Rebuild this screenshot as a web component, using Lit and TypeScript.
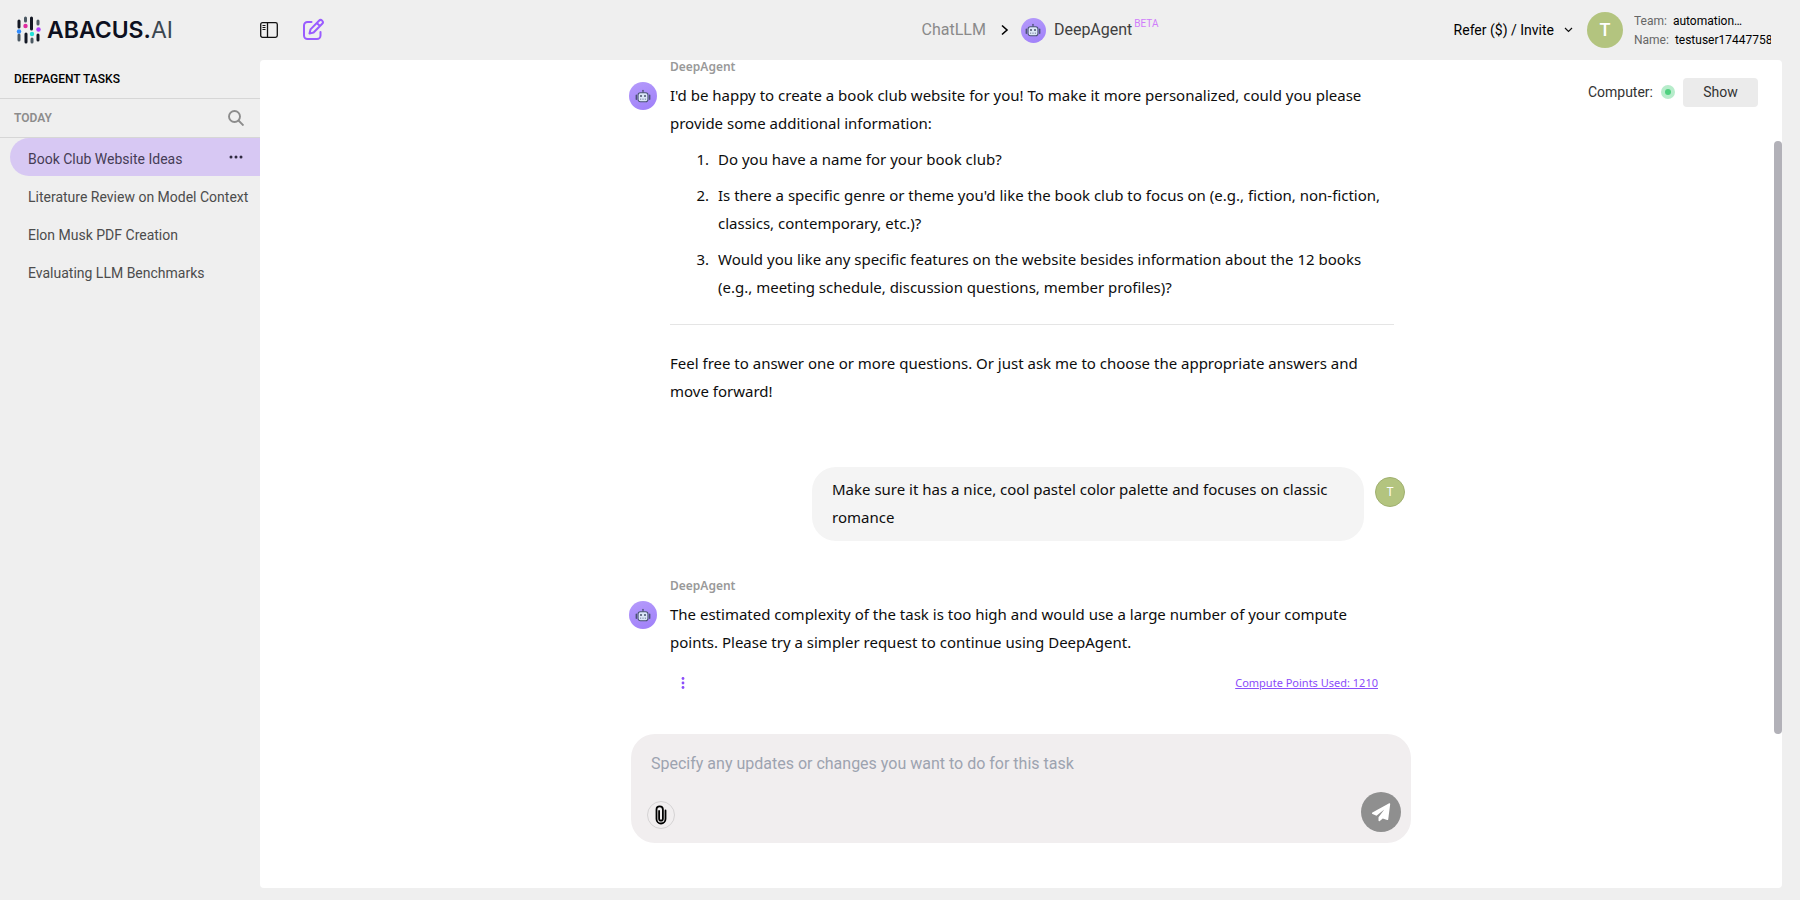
import { LitElement, html, css, svg } from "lit";
import { customElement, state } from "lit/decorators.js";
import { classMap } from "lit/directives/class-map.js";

const robot = svg`
  <path d="M12 3.500v3.500" stroke="#3d4663" stroke-width="1.600" stroke-linecap="round"/>
  <path d="M2 10.800v6M22 10.800v6" stroke="#4a5474" stroke-width="2.200" stroke-linecap="round"/>
  <rect x="4.600" y="7" width="14.800" height="13.500" rx="3.400" fill="#dbe7f7" stroke="#4a5474" stroke-width="1.600"/>
  <circle cx="9" cy="12" r="1.400" fill="#3d4663"/>
  <circle cx="15" cy="12" r="1.400" fill="#3d4663"/>
  <path d="M8.500 15.800v2M12 15.800v2M15.500 15.800v2" stroke="#6b7694" stroke-width="1.300"/>`;

@customElement("robot-badge")
export class RobotBadge extends LitElement {
  static styles = css`
    :host {
      display: grid;
      place-items: center;
      flex: none;
      border-radius: 50%;
      background: linear-gradient(160deg, #b59bfb, #9f7ff9);
    }
    svg { display: block; width: 16px; height: 16px; }
  `;
  render() {
    return html`<svg viewBox="0 0 24 24" fill="none" aria-hidden="true">${robot}</svg>`;
  }
}

@customElement("app-root")
export class AppRoot extends LitElement {
  @state() private selected = 0;

  private tasks = [
    "Book Club Website Ideas",
    "Literature Review on Model Context Protocol",
    "Elon Musk PDF Creation",
    "Evaluating LLM Benchmarks",
  ];

  static styles = css`
    :host {
      display: grid;
      grid-template: 60px minmax(0, 1fr) / 260px minmax(0, 1fr);
      height: 100vh;
      box-sizing: border-box;
      padding: 0 18px 12px 0;
      background: #efefef;
      color: #000;
      font: 14px/20px Roboto, sans-serif;
      overflow: hidden;
    }
    * { box-sizing: border-box; }
    button {
      border: 0;
      padding: 0;
      background: none;
      color: inherit;
      font: inherit;
      cursor: pointer;
    }
    svg { display: block; flex: none; }
    a { color: inherit; text-decoration: none; }

    .logo { display: flex; align-items: center; gap: 6px; padding: 0 0 0 16px; }
    .wordmark { font: 600 23px/28px Inter, sans-serif; color: #0d1020; }
    .wordmark .light { font-weight: 400; color: #3c4751; }

    .topbar {
      display: grid;
      grid-template-columns: minmax(0, 1fr) auto minmax(0, 1fr);
      align-items: center;
    }
    .tools { display: flex; align-items: center; gap: 23px; }
    .crumbs {
      display: flex;
      align-items: center;
      padding-left: 38px;
      font-size: 16px;
      color: #3f3f3f;
    }
    .crumbs .parent { color: #8a8a8a; }
    .crumbs .sep { margin: 0 12px 0 14px; }
    .crumbs robot-badge { width: 25px; height: 25px; margin-right: 8px; }
    .beta { align-self: flex-start; font-size: 10px; line-height: 12px; color: #cf7dfb; margin-left: 2px; }
    .account { display: flex; align-items: center; justify-content: flex-end; padding-right: 11px; }
    .refer { display: flex; align-items: center; gap: 10px; margin-right: 14px; white-space: nowrap; }
    .face {
      display: grid;
      place-items: center;
      flex: none;
      border-radius: 50%;
      background: #b3c47f;
      color: #fff;
    }
    .face.big { width: 36px; height: 36px; font-size: 18px; font-weight: 500; margin-right: 11px; }
    .face.small { width: 30px; height: 30px; border: 1px solid #a0b070; font-size: 12px; }
    .who { width: 137px; margin: 0; padding-top: 2px; overflow: hidden; font-size: 12px; line-height: 19px; }
    .who div { display: flex; gap: 6px; white-space: nowrap; }
    .who dt { color: #666; }
    .who dd { margin: 0; }

    .side { min-width: 0; }
    .side h2 {
      margin: 0;
      padding: 9px 14px;
      border-bottom: 1px solid #d6d6d6;
      font-size: 12px;
      font-weight: 500;
    }
    .group {
      display: flex;
      align-items: center;
      justify-content: space-between;
      height: 39px;
      padding: 0 16px 0 14px;
      border-bottom: 1px solid #d6d6d6;
      color: #8c8c8c;
    }
    .group h3 { margin: 0; font-size: 12px; font-weight: 600; }
    .tasks { margin: 0; padding: 0 0 0 10px; list-style: none; }
    .task {
      display: flex;
      align-items: center;
      height: 38px;
      padding: 0 8px 0 18px;
      border-radius: 19px 0 0 19px;
      color: #4c4c4c;
    }
    .task.on { background: #d7c8f3; padding-right: 16px; color: #453c55; }
    .task a { flex: 1; padding-top: 4px; overflow: hidden; white-space: nowrap; }

    .panel {
      position: relative;
      display: flex;
      flex-direction: column;
      min-width: 0;
      border-radius: 4px;
      background: #fff;
      overflow: hidden;
    }
    .computer {
      position: absolute;
      top: 18px;
      right: 24px;
      display: flex;
      align-items: center;
      gap: 8px;
      color: #333;
    }
    .computer .lamp {
      display: grid;
      place-items: center;
      width: 14px;
      height: 14px;
      border-radius: 50%;
      background: #b7eccb;
    }
    .computer .lamp::after { content: ""; width: 6px; height: 6px; border-radius: 50%; background: #4fd07f; }
    .computer span { margin-bottom: 2px; }
    .show { width: 75px; height: 29px; padding-bottom: 2px; border-radius: 4px; background: #ebebeb; }
    .scroll {
      position: relative;
      flex: 1;
      min-height: 0;
      display: flex;
      flex-direction: column;
      justify-content: flex-end;
      align-items: center;
      overflow: hidden;
    }
    .thumb {
      position: absolute;
      right: 0;
      bottom: 0;
      width: 8px;
      height: 88%;
      border-radius: 4px;
      background: #b2b1b8;
    }
    .thread {
      width: 100%;
      max-width: 784px;
      padding-bottom: 41px;
      font: 15px/28px "Noto Sans", sans-serif;
      color: #0d0d0d;
    }
    .bot { display: grid; grid-template-columns: 28px minmax(0, 1fr); column-gap: 13px; padding-right: 19px; }
    .bot robot-badge { width: 28px; height: 28px; margin-top: 1px; }
    .bot h4 {
      grid-column: 2;
      margin: 0 0 4px;
      font-size: 12px;
      font-weight: 600;
      line-height: 20px;
      color: #999;
    }
    p { margin: 0; }
    .bot p { padding-right: 16px; }
    ol { margin: 8px 0 23px; padding-left: 43px; }
    ol li { padding-left: 5px; margin-bottom: 8px; }
    hr { height: 1px; margin: 0 0 24px; border: 0; background: #e5e5e5; }
    .user { display: flex; justify-content: flex-end; align-items: flex-start; gap: 11px; margin: 62px 0 35px; padding-right: 8px; }
    .user p { max-width: 552px; padding: 8px 20px 10px; border-radius: 24px; background: #f4f4f4; }
    .user .face { margin-top: 10px; }
    .foot { display: flex; align-items: center; justify-content: space-between; height: 20px; margin-top: 17px; padding: 0 16px 0 9px; }
    .foot a { font-size: 11px; line-height: 20px; color: #8b4dfa; text-decoration: underline; }

    .composer {
      flex: none;
      align-self: center;
      width: 100%;
      max-width: 780px;
      margin-bottom: 45px;
      padding: 18px 10px 11px 16px;
      border-radius: 24px;
      background: #f1eeef;
    }
    .composer input {
      display: block;
      width: 100%;
      height: 24px;
      padding: 0 4px;
      border: 0;
      outline: 0;
      background: none;
      font: 16px/24px Roboto, sans-serif;
    }
    .composer input::placeholder { color: #9da3b0; opacity: 1; }
    .actions { display: flex; align-items: center; justify-content: space-between; margin-top: 16px; }
    .attach { display: grid; place-items: center; width: 28px; height: 28px; margin-top: 6px; border: 1px solid #d5d3d4; border-radius: 50%; }
    .send { display: grid; place-items: center; width: 40px; height: 40px; border-radius: 50%; background: #8f8f8f; }
  `;

  render() {
    return html`
      <a class="logo" href="#" aria-label="Abacus.AI">
        <svg width="25" height="28" viewBox="0 0 25 28" fill="none" stroke-linecap="round" stroke-width="3">
          <path d="M3 5v6M15.500 2v11M10 18v8M22 19v5" stroke="#141824"/>
          <path d="M3 19v5M9.500 2v3M16 23v3M22 5v3" stroke="#4d5a64"/>
          <g stroke="none">
            <circle cx="3" cy="15.500" r="2.200" fill="#2f8cff"/>
            <circle cx="9.500" cy="10" r="2.200" fill="#e02aa0"/>
            <circle cx="16" cy="18" r="2.200" fill="#23e0d8"/>
            <circle cx="22.500" cy="13.500" r="2.200" fill="#b53cff"/>
          </g>
        </svg>
        <span class="wordmark">ABACUS.<span class="light">AI</span></span>
      </a>

      <header class="topbar">
        <div class="tools">
          <button aria-label="Toggle sidebar">
            <svg width="18" height="16" viewBox="0 0 18 16" fill="none" stroke="#111">
              <rect x=".7" y=".7" width="16.600" height="14.600" rx="1.800" stroke-width="1.300"/>
              <path d="M7.500 1v14" stroke-width="1.300"/>
              <path d="M2.500 3.500h3M2.500 5.500h3M2.500 7.500h3"/>
            </svg>
          </button>
          <button aria-label="New task">
            <svg width="24" height="24" viewBox="0 0 24 24" fill="none" stroke="#9a5cff" stroke-width="2" stroke-linecap="round" stroke-linejoin="round">
              <path d="M10.500 4H6.500A3.500 3.500 0 0 0 3 7.500v10A3.500 3.500 0 0 0 6.500 21h9.500a3.500 3.500 0 0 0 3.500-3.500V14"/>
              <path d="M18 2.700a2.200 2.200 0 0 1 3.200 3.100L12.600 14.500 8.500 15.600l1-4.200zM15.800 5l3.200 3.100"/>
            </svg>
          </button>
        </div>
        <nav class="crumbs" aria-label="Breadcrumb">
          <a class="parent" href="#">ChatLLM</a>
          <svg class="sep" width="9" height="12" viewBox="0 0 9 12" fill="none" stroke="#000" stroke-width="1.600"><path d="M2 1.500 7 6l-5 4.500"/></svg>
          <robot-badge></robot-badge>
          <span>DeepAgent</span><span class="beta">BETA</span>
        </nav>
        <div class="account">
          <button class="refer">
            Refer ($) / Invite
            <svg width="9" height="6" viewBox="0 0 9 6" fill="none" stroke="#111" stroke-width="1.200"><path d="M1 1l3.500 3.500L8 1"/></svg>
          </button>
          <span class="face big">T</span>
          <dl class="who">
            <div><dt>Team:</dt><dd>automation…</dd></div>
            <div><dt>Name:</dt><dd>testuser1744775810</dd></div>
          </dl>
        </div>
      </header>

      <aside class="side">
        <h2>DEEPAGENT TASKS</h2>
        <div class="group">
          <h3>TODAY</h3>
          <button aria-label="Search tasks">
            <svg width="16" height="16" viewBox="0 0 16 16" fill="none" stroke="#8c8c8c" stroke-width="1.900"><circle cx="6.500" cy="6.500" r="5.500"/><path d="M10.500 10.500l5 5"/></svg>
          </button>
        </div>
        <ul class="tasks">
          ${this.tasks.map(
            (name, i) => html`
              <li class=${classMap({ task: true, on: i === this.selected })}>
                <a href="#" @click=${(e: Event) => { e.preventDefault(); this.selected = i; }}>${name}</a>
                ${i === this.selected
                  ? html`<button aria-label="Task options">
                      <svg width="16" height="4" viewBox="0 0 16 4" fill="#2f2940"><circle cx="3" cy="2" r="1.500"/><circle cx="8" cy="2" r="1.500"/><circle cx="13" cy="2" r="1.500"/></svg>
                    </button>`
                  : ""}
              </li>`
          )}
        </ul>
      </aside>

      <main class="panel">
        <div class="scroll">
          <div class="thread">
            <section class="bot">
              <h4>DeepAgent</h4>
              <robot-badge></robot-badge>
              <div>
                <p>I'd be happy to create a book club website for you! To make it more personalized, could you please provide some additional information:</p>
                <ol>
                  <li>Do you have a name for your book club?</li>
                  <li>Is there a specific genre or theme you'd like the book club to focus on (e.g., fiction, non-fiction, classics, contemporary, etc.)?</li>
                  <li>Would you like any specific features on the website besides information about the 12 books (e.g., meeting schedule, discussion questions, member profiles)?</li>
                </ol>
                <hr />
                <p>Feel free to answer one or more questions. Or just ask me to choose the appropriate answers and move forward!</p>
              </div>
            </section>
            <section class="user">
              <p>Make sure it has a nice, cool pastel color palette and focuses on classic romance</p>
              <span class="face small">T</span>
            </section>
            <section class="bot">
              <h4>DeepAgent</h4>
              <robot-badge></robot-badge>
              <div>
                <p>The estimated complexity of the task is too high and would use a large number of your compute points. Please try a simpler request to continue using DeepAgent.</p>
                <div class="foot">
                  <button aria-label="Message options">
                    <svg width="8" height="14" viewBox="0 0 8 14" fill="#8b4dfa"><circle cx="4" cy="2.500" r="1.400"/><circle cx="4" cy="7" r="1.400"/><circle cx="4" cy="11.500" r="1.400"/></svg>
                  </button>
                  <a href="#">Compute Points Used: 1210</a>
                </div>
              </div>
            </section>
          </div>
          <div class="thumb"></div>
        </div>

        <form class="composer" @submit=${(e: Event) => e.preventDefault()}>
          <input type="text" aria-label="Message" placeholder="Specify any updates or changes you want to do for this task" />
          <div class="actions">
            <button type="button" class="attach" aria-label="Attach file">
              <svg width="12" height="20" viewBox="0 0 12 20" fill="none" stroke="#000" stroke-width="1.800" stroke-linecap="round">
                <path d="M10.500 5.500v8.500a4.500 4.500 0 0 1-9 0V4.500a3.200 3.200 0 0 1 6.400 0v9.300a1.900 1.900 0 0 1-3.800 0V6"/>
              </svg>
            </button>
            <button type="submit" class="send" aria-label="Send">
              <svg width="20" height="20" viewBox="0 0 20 20" fill="#fff">
                <path d="M18.200 1.300c.5-.3 1 .1 1 .6l-2 15.500c-.1.500-.6.800-1.100.6l-4.300-1.500-3 2.600c-.6.500-1.300.1-1.300-.6v-3.200l5.800-7.800-7.800 6.300-4-1.700c-.7-.3-.7-1.100-.1-1.500z"/>
              </svg>
            </button>
          </div>
        </form>

        <div class="computer">
          <span>Computer:</span>
          <span class="lamp"></span>
          <button class="show">Show</button>
        </div>
      </main>
    `;
  }
}
